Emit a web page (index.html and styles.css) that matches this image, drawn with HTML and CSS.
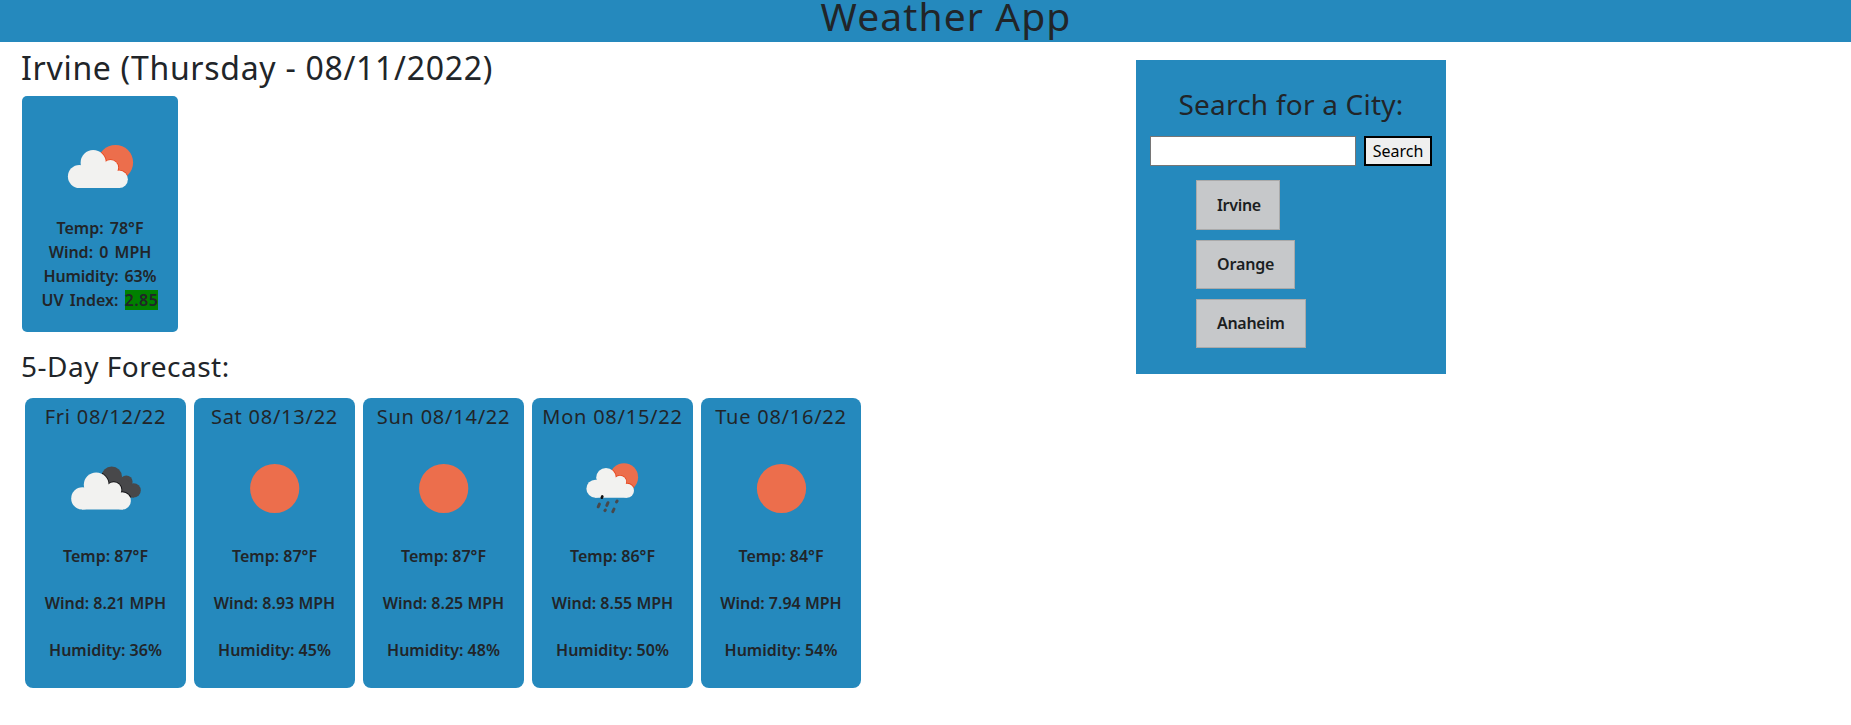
FILE: index.html
```
<!DOCTYPE html>
<html lang="en">
<head>
<meta charset="utf-8">
<title>Weather App</title>
<link rel="stylesheet" href="styles.css">
</head>
<body>
<header class="header"><h1 class="title">Weather App</h1></header>
<main class="layout">
  <section class="weather">
    <h2 class="city">Irvine (Thursday - 08/11/2022)</h2>
    <article class="current">
      <svg class="icon" viewBox="0 0 100 100">
        <defs>
          <clipPath id="sun-a"><circle cx="65.5" cy="46.5" r="17.6"/></clipPath>
          <g id="cloud-a"><circle cx="29.4" cy="60.5" r="11.5"/><circle cx="43.2" cy="46.7" r="12.6"/><circle cx="60.5" cy="51.8" r="7.7"/><circle cx="69.2" cy="63.3" r="8.7"/><path d="M29 50H60L70 60V72H29Z"/></g>
        </defs>
        <circle cx="65.5" cy="46.5" r="17.6" fill="#ec6e4c"/>
        <g clip-path="url(#sun-a)"><use class="rim-red" href="#cloud-a"/></g>
        <use class="cloud" href="#cloud-a"/>
      </svg>
      <p class="line">Temp: 78°F</p>
      <p class="line">Wind: 0 MPH</p>
      <p class="line line-humidity">Humidity: 63%</p>
      <p class="line">UV Index: <span class="uv">2.85</span></p>
    </article>
    <h3 class="subtitle">5-Day Forecast:</h3>
    <div class="forecast">
      <article class="day">
        <h5 class="date">Fri 08/12/22</h5>
        <svg class="icon" viewBox="0 0 100 100">
          <defs>
            <g id="back"><circle cx="55.7" cy="38.7" r="10.3"/><circle cx="70.3" cy="43.8" r="6.3"/><circle cx="77.6" cy="52.4" r="7.2"/><path d="M55 40H70L78 50V59.6H55Z"/></g>
            <clipPath id="back-clip"><circle cx="55.7" cy="38.7" r="10.3"/><circle cx="70.3" cy="43.8" r="6.3"/><circle cx="77.6" cy="52.4" r="7.2"/><path d="M55 40H70L78 50V59.6H55Z"/></clipPath>
            <g id="cloud-b"><circle cx="26.4" cy="60.4" r="11.2"/><circle cx="40.2" cy="46.8" r="12.4"/><circle cx="57.7" cy="51.9" r="7.7"/><circle cx="66.2" cy="62.9" r="8.7"/><path d="M26 50H57L67 60V71.6H26Z"/></g>
          </defs>
          <use href="#back" fill="#48484a"/>
          <g clip-path="url(#back-clip)"><use class="rim-dark" href="#cloud-b"/></g>
          <use class="cloud" href="#cloud-b"/>
        </svg>
        <p class="stat">Temp: 87°F</p><p class="stat">Wind: 8.21 MPH</p><p class="stat">Humidity: 36%</p>
      </article>
      <article class="day">
        <h5 class="date">Sat 08/13/22</h5>
        <svg class="icon" viewBox="0 0 100 100"><circle cx="49.7" cy="50.5" r="24.6" fill="#ec6e4c"/></svg>
        <p class="stat">Temp: 87°F</p><p class="stat">Wind: 8.93 MPH</p><p class="stat">Humidity: 45%</p>
      </article>
      <article class="day">
        <h5 class="date">Sun 08/14/22</h5>
        <svg class="icon" viewBox="0 0 100 100"><circle cx="49.7" cy="50.5" r="24.6" fill="#ec6e4c"/></svg>
        <p class="stat">Temp: 87°F</p><p class="stat">Wind: 8.25 MPH</p><p class="stat">Humidity: 48%</p>
      </article>
      <article class="day">
        <h5 class="date">Mon 08/15/22</h5>
        <svg class="icon" viewBox="0.8 -0.7 100 100">
          <defs>
            <clipPath id="sun-c"><circle cx="61.8" cy="38.6" r="14.1"/></clipPath>
            <g id="cloud-c"><circle cx="33.2" cy="50" r="9"/><circle cx="43.8" cy="39" r="9.8"/><circle cx="57.8" cy="43.3" r="6.2"/><circle cx="64.8" cy="52" r="7"/><path d="M33 42H57L65 50V59H33Z"/></g>
          </defs>
          <circle cx="61.8" cy="38.6" r="14.1" fill="#ec6e4c"/>
          <g clip-path="url(#sun-c)"><use class="rim-red" href="#cloud-c"/></g>
          <use class="cloud" href="#cloud-c"/>
          <path stroke="#48484a" stroke-width="2.9" stroke-linecap="round" d="M37.2 65.4l-1.2 2.7M45.8 64l-1.2 2.7M54.9 62.3l-.6 1M43.1 71.3l-.4.6M51.8 70.3l-1.2 2.7"/>
          <path stroke="#111" stroke-width="2.7" stroke-linecap="round" d="M40.1 57.8l-.5 1.2"/>
        </svg>
        <p class="stat">Temp: 86°F</p><p class="stat">Wind: 8.55 MPH</p><p class="stat">Humidity: 50%</p>
      </article>
      <article class="day day-last">
        <h5 class="date">Tue 08/16/22</h5>
        <svg class="icon" viewBox="0 0 100 100"><circle cx="50.5" cy="50.5" r="24.6" fill="#ec6e4c"/></svg>
        <p class="stat">Temp: 84°F</p><p class="stat">Wind: 7.94 MPH</p><p class="stat">Humidity: 54%</p>
      </article>
    </div>
  </section>
  <aside class="search">
    <h3 class="search-title">Search for a City:</h3>
    <form class="search-form">
      <input class="field" type="text" aria-label="City">
      <button class="submit" type="button">Search</button>
    </form>
    <ul class="history">
      <li class="item item-irvine">Irvine</li>
      <li class="item item-orange">Orange</li>
      <li class="item item-anaheim">Anaheim</li>
    </ul>
  </aside>
</main>
</body>
</html>
```
FILE: styles.css
```
* { box-sizing: border-box; }
body { margin: 0; background: #fff; color: #212529; font: 16px/24px "Noto Sans", sans-serif; overflow: hidden; }
h1, h2, h3, h5, p, ul { margin: 0; padding: 0; font-weight: 400; white-space: nowrap; }
.header { height: 42px; padding-left: 41px; background: #2589bd; text-align: center; }
.title { font-size: 39px; line-height: 32px; letter-spacing: 1.1px; }
.layout { display: flex; align-items: flex-start; }
.weather { width: 1136px; padding: 7px 0 0 21px; }
.city { font-size: 32px; line-height: 38px; letter-spacing: .7px; }
.current { width: 156px; height: 236px; margin: 9px 0 0 1px; padding-top: 20px; border-radius: 5px; background: #2589bd; text-align: center; }
.icon { display: block; width: 100px; height: 100px; margin: 0 auto; fill: none; }
.cloud { fill: #f2f2f0; }
.rim-red { fill: #e8481f; stroke: #e8481f; stroke-width: 1.8px; }
.rim-dark { fill: #151518; stroke: #151518; stroke-width: 1.8px; }
.line, .stat { font-weight: 600; }
.line { word-spacing: 2px; }
.line-humidity { letter-spacing: -.15px; }
.uv { display: inline-block; height: 20px; line-height: 20px; background: #008000; letter-spacing: .5px; word-spacing: 0; }
.subtitle { margin-top: 17px; font-size: 28px; line-height: 34px; letter-spacing: .5px; }
.forecast { display: flex; gap: 8px; padding: 15px 0 0 4px; }
.day { width: 161px; height: 290px; padding-top: 7px; border-radius: 8px; background: #2589bd; text-align: center; }
.day-last { width: 160px; }
.date { height: 33px; font-size: 20px; line-height: 24px; letter-spacing: .75px; }
.stat { margin-bottom: 23px; }
.day .icon { margin-bottom: 6px; }
.search { width: 310px; height: 314px; margin-top: 18px; padding: 27px 14px 0; background: #2589bd; }
.search-title { font-size: 28px; line-height: 34px; letter-spacing: .22px; text-align: center; }
.search-form { display: flex; gap: 8px; margin-top: 15px; }
.field { width: 206px; height: 30px; border: 1px solid #767676; border-radius: 0; background: #fff; }
.submit { width: 68px; height: 30px; padding: 0 0 1px; border: 2px solid #000; background: #efefef; color: #000; font: 16px "Noto Sans", sans-serif; }
.history { display: flex; flex-direction: column; align-items: flex-start; gap: 10px; padding: 14px 0 0 46px; list-style: none; }
.item { height: 49px; padding: 11px 0 0 20px; border: 1px solid #aaa; background: #c6c8ca; color: #1b1e21; font-weight: 600; }
.item-irvine { width: 84px; height: 50px; padding-top: 12px; letter-spacing: -.3px; }
.item-orange { width: 99px; letter-spacing: -.15px; }
.item-anaheim { width: 110px; letter-spacing: -.3px; }
```
